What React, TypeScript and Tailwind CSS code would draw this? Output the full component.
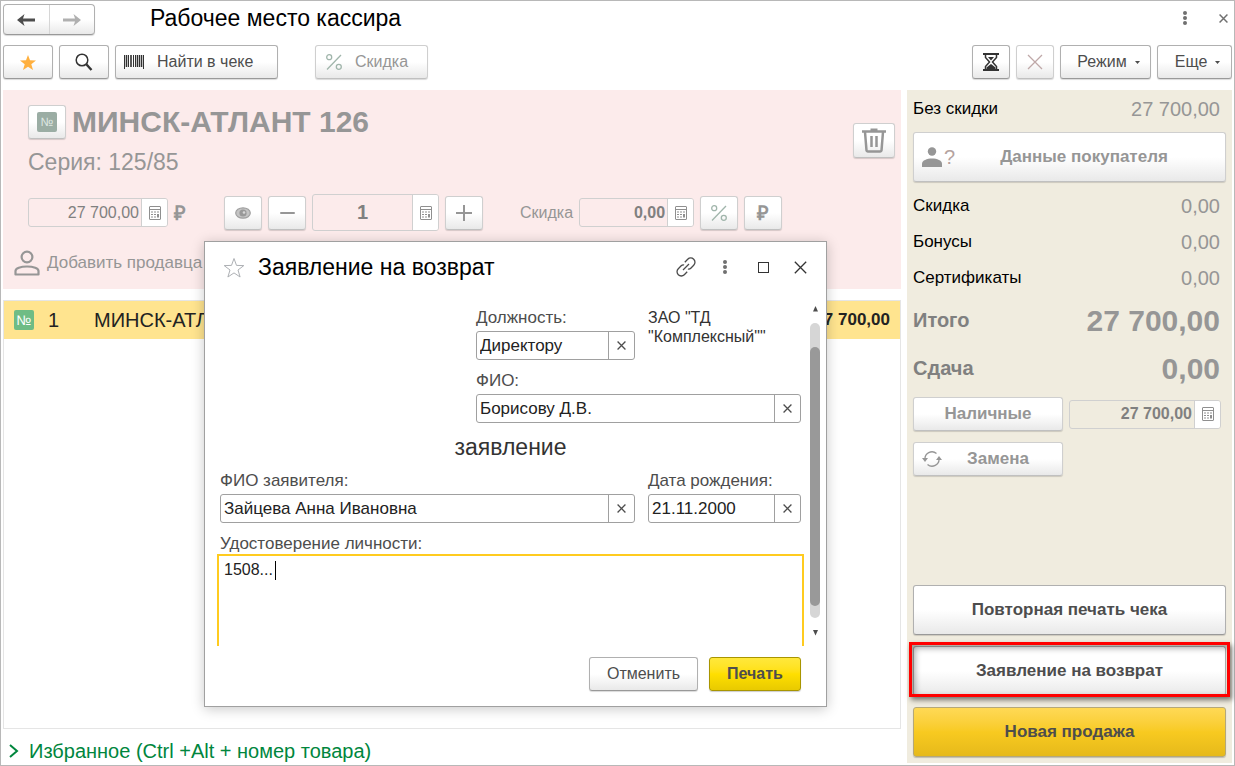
import { useState } from "react";
import type { ReactNode } from "react";
import clsx from "clsx";

type BtnProps = {
  children: ReactNode;
  className?: string;
  muted?: boolean;
  start?: boolean;
  label?: string;
};

function Btn({ children, className, muted, start, label }: BtnProps) {
  return (
    <button
      type="button"
      aria-label={label}
      className={clsx(
        "flex shrink-0 items-center rounded-[3px] border bg-linear-to-b from-white from-50% to-[#e9e9e9] shadow-[0_1px_1px_rgba(0,0,0,0.15)]",
        start ? "justify-start" : "justify-center",
        muted ? "border-[#cfcfcf] border-b-[#c0c0c0] text-[#969696]" : "border-[#b0b0b0] border-b-[#999] text-[#4d4d4d]",
        className
      )}
    >
      {children}
    </button>
  );
}

function CalcIcon() {
  return (
    <svg width="12" height="14" viewBox="0 0 12 14" fill="none" stroke="#8f8f8f">
      <rect x="0.5" y="0.5" width="11" height="13" rx="0.5" />
      <path d="M0.5 3.5h11" />
      <path d="M2 6h2M5 6h2M8 6h2M2 8.5h2M5 8.5h2M2 11h2M5 11h2" />
      <path d="M9 8v3.5" strokeWidth="2" />
    </svg>
  );
}

type MoneyProps = {
  label: string;
  value: string;
  className?: string;
  inputClass?: string;
};

function MoneyInput({ label, value, className, inputClass = "text-right" }: MoneyProps) {
  return (
    <div className={clsx("flex shrink-0 overflow-hidden rounded-[3px] border border-[#d0d0d0]", className)}>
      <input
        aria-label={label}
        defaultValue={value}
        className={clsx("h-full w-0 min-w-0 flex-1 bg-transparent px-0.5 text-[#808080] outline-none", inputClass)}
      />
      <button type="button" aria-label="Калькулятор" className="grid w-[26px] place-items-center border-l border-[#d0d0d0] bg-white">
        <CalcIcon />
      </button>
    </div>
  );
}

function Cross({ size, color, width = 1 }: { size: number; color: string; width?: number }) {
  return (
    <svg width={size} height={size} viewBox="0 0 16 16" fill="none" stroke={color} strokeWidth={(width * 16) / size}>
      <path d="M1 1l14 14M15 1L1 15" />
    </svg>
  );
}

function Percent() {
  return (
    <svg width="16" height="16" viewBox="0 0 16 16" fill="none" stroke="#a0b5ab" strokeWidth="1.3">
      <circle cx="3.2" cy="3.2" r="2.5" />
      <circle cx="12.8" cy="12.8" r="2.5" />
      <path d="M15 1L1 15.5" />
    </svg>
  );
}

function Dots() {
  return (
    <svg width="6" height="16" viewBox="0 0 6 16" fill="#707070">
      <circle cx="3" cy="3" r="2" />
      <circle cx="3" cy="8" r="2" />
      <circle cx="3" cy="13" r="2" />
    </svg>
  );
}

function Caret() {
  return (
    <svg width="5" height="3" viewBox="0 0 5 3" fill="#4d4d4d">
      <path d="M0 0h5L2.5 3z" />
    </svg>
  );
}

function Field({ id, label, value, className }: { id: string; label: string; value: string; className?: string }) {
  const [text, setText] = useState(value);
  return (
    <div className={clsx("flex flex-col gap-[3px]", className)}>
      <label htmlFor={id} className="text-[17px] leading-5 text-[#4d4d4d]">
        {label}
      </label>
      <div className="flex h-[29px] rounded-[3px] border border-[#a0a0a0]">
        <input
          id={id}
          value={text}
          onChange={(e) => setText(e.target.value)}
          className="w-0 min-w-0 flex-1 bg-transparent pl-[3px] text-[17px] text-[#222] outline-none"
        />
        <button
          type="button"
          aria-label={`Очистить ${label}`}
          onClick={() => setText("")}
          className="grid w-[26px] place-items-center border-l border-[#a0a0a0]"
        >
          <Cross size={9} color="#4d4d4d" width={1.3} />
        </button>
      </div>
    </div>
  );
}

function ReturnDialog() {
  return (
    <section
      role="dialog"
      aria-labelledby="dialog-title"
      className="absolute top-[240px] left-[203px] w-[623px] border border-[#a0a0a0] bg-white shadow-[0_2px_12px_rgba(0,0,0,0.22)]"
    >
      <header className="flex h-[50px] items-center pr-[19px] pl-[18px]">
        <button type="button" aria-label="В избранное">
          <svg width="22" height="21" viewBox="0 0 22 21" fill="none" stroke="#adb0b4">
            <path d="M11 1.5l2.5 6.9 7.3.2-5.8 4.4 2.1 7-6.1-4.1L4.9 20 7 13 1.2 8.6l7.3-.2z" />
          </svg>
        </button>
        <h2 id="dialog-title" className="ml-[13px] flex-1 text-[23px] text-black">
          Заявление на возврат
        </h2>
        <div className="flex items-center">
          <button type="button" aria-label="Ссылка">
            <svg width="20" height="20" viewBox="0 0 20 20" fill="none" stroke="#4a4a4a" strokeWidth="1.3">
              <path d="M7 13l6-6" />
              <path d="M8.8 5.2l2.900-2.900c1.700-1.700 4.300-1.700 6 0s1.700 4.300 0 6l-2.900 2.900c-.8.8-1.900 1.100-2.900.8" />
              <path d="M11.200 14.800l-2.900 2.900c-1.700 1.700-4.300 1.700-6 0s-1.700-4.300 0-6l2.900-2.900c.8-.8 1.900-1.100 2.900-.8" />
            </svg>
          </button>
          <button type="button" aria-label="Меню" className="ml-[26px]">
            <Dots />
          </button>
          <button type="button" aria-label="Развернуть" className="ml-[30px] h-[11px] w-[11px] border border-[#333]" />
          <button type="button" aria-label="Закрыть" className="ml-[25px]">
            <Cross size={13} color="#333" width={1.3} />
          </button>
        </div>
      </header>

      <div className="flex pr-1.5 pl-[15px]">
        <form className="flex-1 pt-4">
          <div className="grid grid-cols-[256px_159px_1fr]">
            <Field id="post" label="Должность:" value="Директору" className="col-start-2" />
            <p className="pl-[13px] leading-[19px] text-[#333]">
              ЗАО "ТД
              <br />
              "Комплексный""
            </p>
            <Field id="head" label="ФИО:" value="Борисову Д.В." className="col-span-2 col-start-2 mt-[11px]" />
          </div>
          <h3 className="pt-px text-center text-[23px] leading-[47px] text-[#333]">заявление</h3>
          <div className="grid grid-cols-[415px_1fr] gap-x-[13px]">
            <Field id="applicant" label="ФИО заявителя:" value="Зайцева Анна Ивановна" />
            <Field id="birth" label="Дата рождения:" value="21.11.2000" />
          </div>
          <label htmlFor="identity" className="mt-[11px] block text-[17px] leading-5 text-[#4d4d4d]">
            Удостоверение личности:
          </label>
          <div className="relative -mx-[3px] h-[92px]">
            <textarea
              id="identity"
              defaultValue="1508..."
              className="block h-full w-full resize-none border-2 border-b-0 border-[#ffcb1f] px-[5px] py-1 leading-5 text-[#222] outline-none"
            />
            <span className="absolute top-[7px] left-[58px] h-[19px] w-px bg-black" />
          </div>
        </form>

        {/* Scrollbar */}
        <div className="ml-[9px] flex w-2.5 flex-col items-center pt-3.5">
          <svg width="5" height="6" viewBox="0 0 5 6" fill="#4d4d4d">
            <path d="M0 5.5h5L2.5 0z" />
          </svg>
          <div className="mt-[11px] h-[295px] w-full rounded-full bg-[#d6d6d6] pt-6">
            <div className="h-[259px] rounded-full bg-[#999]" />
          </div>
          <svg className="mt-3" width="5" height="6" viewBox="0 0 5 6" fill="#4d4d4d">
            <path d="M0 0h5L2.5 5.5z" />
          </svg>
        </div>
      </div>

      <footer className="flex justify-end gap-[11px] pt-[11px] pr-[25px] pb-[15px]">
        <Btn className="h-[34px] w-[109px]">Отменить</Btn>
        <button
          type="button"
          className="h-[34px] w-[92px] rounded-[3px] border border-[#a89500] bg-linear-to-b from-[#ffe83b] via-[#ffdf00] to-[#e8ca00] font-bold text-[#4d4d4d] shadow-[0_1px_1px_rgba(0,0,0,0.2)]"
        >
          Печать
        </button>
      </footer>
    </section>
  );
}

function ProductCard() {
  return (
    <section className="bg-[#fcebeb] pt-[15px] pb-[13px] text-[#969696]">
      <div className="flex items-center pr-1.5 pl-[25px]">
        <div className="flex-1">
          <div className="flex items-center gap-1.5">
            <Btn muted label="Номер серии" className="h-[34px] w-[38px]">
              <span className="grid h-5 w-5 place-items-center rounded-xs bg-[#9bada4] text-xs text-[#dfe8e3]">№</span>
            </Btn>
            <h2 className="text-[30px] leading-8 font-bold">МИНСК-АТЛАНТ 126</h2>
          </div>
          <p className="mt-[9px] text-[23px] leading-7">Серия: 125/85</p>
        </div>
        <Btn muted label="Удалить" className="h-[35px] w-[42px]">
          <svg width="24" height="25" viewBox="0 0 24 25" fill="none" stroke="#969696" strokeWidth="2.5">
            <path d="M0 3.5h24" />
            <path d="M8.5 2h7" strokeWidth="3" />
            <path d="M3 4l1.5 18.500q.1 1 1.200 1h12.600q1.100 0 1.200-1L21 4" />
            <path d="M9.500 8v11M14.500 8v11" />
          </svg>
        </Btn>
      </div>

      <div className="mt-[18px] flex items-center gap-1.5 pl-[25px]">
        <MoneyInput label="Цена" value="27 700,00" className="h-[29px] w-[140px]" />
        <span className="w-11 text-[20px] font-bold">₽</span>
        <Btn muted label="Просмотр" className="h-[34px] w-[38px]">
          <svg width="16" height="12" viewBox="0 0 16 12">
            <ellipse cx="8" cy="6" rx="7.3" ry="5.2" fill="#c4c4c4" stroke="#a0a0a0" strokeWidth="1.2" />
            <circle cx="8" cy="6" r="3.6" fill="#999" />
            <circle cx="9" cy="5.5" r="1.3" fill="#d8d8d8" />
          </svg>
        </Btn>
        <Btn muted label="Уменьшить" className="h-[34px] w-[38px]">
          <span className="h-0.5 w-[15px] rounded-full bg-[#969696]" />
        </Btn>
        <MoneyInput label="Количество" value="1" className="h-[37px] w-[127px]" inputClass="text-center text-[20px] font-bold" />
        <Btn muted label="Увеличить" className="h-[34px] w-[38px]">
          <svg width="16" height="16" viewBox="0 0 16 16" stroke="#969696" strokeWidth="2">
            <path d="M0 8h16M8 0v16" />
          </svg>
        </Btn>
        <span className="ml-[31px]">Скидка</span>
        <MoneyInput label="Скидка" value="0,00" className="h-[29px] w-[115px]" inputClass="text-right font-bold" />
        <Btn muted label="Скидка в процентах" className="h-[34px] w-[38px]">
          <Percent />
        </Btn>
        <Btn muted label="Скидка в рублях" className="h-[34px] w-[38px] text-[20px] font-bold">
          ₽
        </Btn>
      </div>

      <button type="button" className="mt-[19px] flex h-[26px] items-center gap-[7px] pl-[11px] text-[17px]">
        <svg width="26" height="26" viewBox="0 0 26 26" fill="none" stroke="#969696" strokeWidth="2.2">
          <circle cx="13" cy="7" r="5.4" />
          <path d="M1.500 24.500v-3.500c0-2.500 5-4.500 11.500-4.500s11.500 2 11.500 4.500v3.500z" strokeLinejoin="round" />
        </svg>
        Добавить продавца
      </button>
    </section>
  );
}

const totals = [
  { name: "Скидка", value: "0,00" },
  { name: "Бонусы", value: "0,00" },
  { name: "Сертификаты", value: "0,00" },
];

const sums = [
  { name: "Итого", value: "27 700,00" },
  { name: "Сдача", value: "0,00" },
];

function Sidebar() {
  return (
    <aside className="flex w-[325px] shrink-0 flex-col bg-[#f0ecdf] px-1.5 pb-1.5 text-[17px]">
      <div className="flex h-[38px] items-center justify-between pr-1.5 text-black">
        <span>Без скидки</span>
        <span className="text-[20px] text-[#969696]">27 700,00</span>
      </div>
      <Btn muted className="my-1 h-[50px] pl-2 font-bold">
        <svg width="20" height="20" viewBox="0 0 20 20" fill="#969696">
          <circle cx="10" cy="4.5" r="4.2" />
          <path d="M0 20v-3.500c0-3 5-5 10-5s10 2 10 5V20z" />
        </svg>
        <span className="ml-0.5 text-[20px] font-normal text-[#b5a3a0]">?</span>
        <span className="flex-1 pr-3 text-center">Данные покупателя</span>
      </Btn>
      <div className="pt-0.5">
        {totals.map((t) => (
          <div key={t.name} className="flex h-9 items-center justify-between pr-1.5 text-black">
            <span>{t.name}</span>
            <span className="text-[20px] text-[#969696]">{t.value}</span>
          </div>
        ))}
        {sums.map((s) => (
          <div key={s.name} className="flex h-12 items-center justify-between pr-1.5 font-bold">
            <span className="text-[20px] text-[#808080]">{s.name}</span>
            <span className="text-[30px] text-[#969696]">{s.value}</span>
          </div>
        ))}
      </div>
      <div className="mt-[5px] flex items-center gap-1.5">
        <Btn muted className="h-[34px] w-[150px] font-bold">
          Наличные
        </Btn>
        <MoneyInput label="Сумма наличными" value="27 700,00" className="h-[29px] w-[152px]" inputClass="text-right text-[16px] font-bold" />
      </div>
      <Btn muted className="mt-[11px] h-[34px] w-[150px] pl-2 font-bold">
        <svg width="20" height="16" viewBox="0 0 20 16" fill="none" stroke="#969696" strokeWidth="1.3">
          <path d="M3 8.500a7 7 0 0 1 11.500-6M17 7.500a7 7 0 0 1-11.500 6" />
          <path d="M0 7h6L3 11zM14 9h6L17 5z" fill="#969696" stroke="none" />
        </svg>
        <span className="flex-1 pr-2 text-center">Замена</span>
      </Btn>

      <div className="mt-auto flex flex-col gap-[11px]">
        <Btn className="h-[50px] font-bold">Повторная печать чека</Btn>
        <div className="relative flex flex-col">
          <Btn className="h-[50px] font-bold">Заявление на возврат</Btn>
          <span className="pointer-events-none absolute -inset-x-1 -top-1 -bottom-px border-3 border-[#f00] shadow-[2px_3px_5px_rgba(0,0,0,0.5),inset_3px_3px_6px_rgba(0,0,0,0.35)]" />
        </div>
        <button
          type="button"
          className="h-[50px] rounded-[3px] border border-[#b5a878] bg-linear-to-b from-[#ffd955] via-[#f8ca20] to-[#e6b91b] font-bold text-[#4d4d4d] shadow-[0_1px_1px_rgba(0,0,0,0.2)]"
        >
          Новая продажа
        </button>
      </div>
    </aside>
  );
}

export default function App() {
  return (
    <div className="relative flex min-h-screen flex-col border border-[#b8b8b8] bg-white font-['Liberation_Sans',Arial,sans-serif] text-[16px] text-[#4d4d4d]">
      <header className="flex items-start pt-[3px] pr-1.5 pl-0.5">
        <div className="flex h-[31px] w-[92px] rounded-[4px] border border-[#b0b0b0] border-b-[#999] bg-linear-to-b from-white from-50% to-[#e9e9e9] shadow-[0_1px_1px_rgba(0,0,0,0.15)]">
          <button type="button" aria-label="Назад" className="grid flex-1 place-items-center border-r border-[#d6d6d6]">
            <svg width="18" height="12" viewBox="0 0 18 12" fill="#4d4d4d">
              <path d="M0 6L7.500 0 6 4.500h12v3H6L7.500 12z" />
            </svg>
          </button>
          <button type="button" aria-label="Вперед" className="grid flex-1 place-items-center">
            <svg width="18" height="12" viewBox="0 0 18 12" fill="#b0b0b0">
              <path d="M18 6L10.500 0 12 4.500H0v3h12L10.500 12z" />
            </svg>
          </button>
        </div>
        <h1 className="ml-[55px] flex-1 text-[23px] leading-7 text-black">Рабочее место кассира</h1>
        <div className="flex h-7 items-center gap-[31px]">
          <button type="button" aria-label="Меню">
            <Dots />
          </button>
          <button type="button" aria-label="Закрыть окно">
            <Cross size={9} color="#707070" width={1.5} />
          </button>
        </div>
      </header>

      <div className="mt-2.5 flex gap-1.5 pr-0.5 pl-0.5">
        <Btn label="Избранное" className="h-[34px] w-[50px]">
          <svg width="16" height="15" viewBox="0 0 16 15" fill="#ffb03f">
            <path d="M8 0l2 5.300 6 .2-4.700 3.700L13 15l-5-3.300L3 15l1.700-5.800L0 5.500l6-.2z" />
          </svg>
        </Btn>
        <Btn label="Поиск" className="h-[34px] w-[50px]">
          <svg width="18" height="18" viewBox="0 0 18 18" fill="none" stroke="#333">
            <circle cx="7" cy="7" r="5.800" strokeWidth="1.500" />
            <path d="M11.300 11.300l5.200 5.700" strokeWidth="2.400" />
          </svg>
        </Btn>
        <Btn start className="h-[34px] w-[163px] gap-[13px] pl-2">
          <svg width="20" height="14" viewBox="0 0 20 14" stroke="#333">
            <path d="M.5 0v14M4.500 0v12M9.500 0v12M11.500 0v12M15.500 0v12M19.500 0v14" />
            <path d="M2.500 0v12M7 0v12M13.500 0v12M17.500 0v12" strokeWidth="1.600" />
          </svg>
          Найти в чеке
        </Btn>
        <Btn muted start className="ml-[31px] h-[34px] w-[113px] gap-[13px] pl-2.5">
          <Percent />
          Скидка
        </Btn>
        <Btn label="Отложить" className="ml-auto h-[34px] w-[38px]">
          <svg width="16" height="18" viewBox="0 0 16 18" fill="none" stroke="#333">
            <path d="M0 1h16M0 17h16" strokeWidth="1.800" />
            <path d="M2.500 1v3.500L6.500 9l-4 4.500V17M13.500 1v3.500L9.500 9l4 4.500V17" strokeWidth="1.500" />
            <path d="M5 4h6L8 7.500zM8 11l4.500 3.500V16h-9v-1.500z" fill="#333" stroke="none" />
          </svg>
        </Btn>
        <Btn muted label="Отменить чек" className="h-[34px] w-[38px]">
          <Cross size={16} color="#bfa8a8" width={1.3} />
        </Btn>
        <Btn className="h-[34px] w-[91px] gap-2 pl-1.5">
          Режим <Caret />
        </Btn>
        <Btn className="h-[34px] w-[75px] gap-2 pl-1.5">
          Еще <Caret />
        </Btn>
      </div>

      <div className="mt-[11px] flex flex-1 gap-1.5 pr-0.5 pl-0.5">
        <main className="flex min-w-0 flex-1 flex-col">
          <ProductCard />
          <div className="mt-[11px] flex-1 border border-[#e5e5e5]">
            <table className="w-full">
              <tbody>
                <tr className="h-[38px] bg-[#ffe48f] text-[#222]">
                  <td className="w-[42px] pl-2.5">
                    <span className="grid h-5 w-5 place-items-center rounded-xs bg-[#6fbc85] text-sm text-white">№</span>
                  </td>
                  <td className="w-[46px] pl-0.5 text-[20px]">1</td>
                  <td className="pl-0.5 text-[20px]">МИНСК-АТЛАНТ 126</td>
                  <td className="pr-2.5 text-right text-[17px] font-bold">27 700,00</td>
                </tr>
              </tbody>
            </table>
          </div>
          <footer className="pt-2 text-[20px] leading-7 text-[#00863d]">
            <a href="#favorites" className="flex items-center gap-2.5 pl-1.5">
              <svg width="10" height="14" viewBox="0 0 10 14" fill="none" stroke="#00863d" strokeWidth="2">
                <path d="M1 1l7 6-7 6" />
              </svg>
              Избранное (Ctrl +Alt + номер товара)
            </a>
          </footer>
        </main>
        <div className="flex pb-0.5">
          <Sidebar />
        </div>
      </div>

      <ReturnDialog />
    </div>
  );
}
